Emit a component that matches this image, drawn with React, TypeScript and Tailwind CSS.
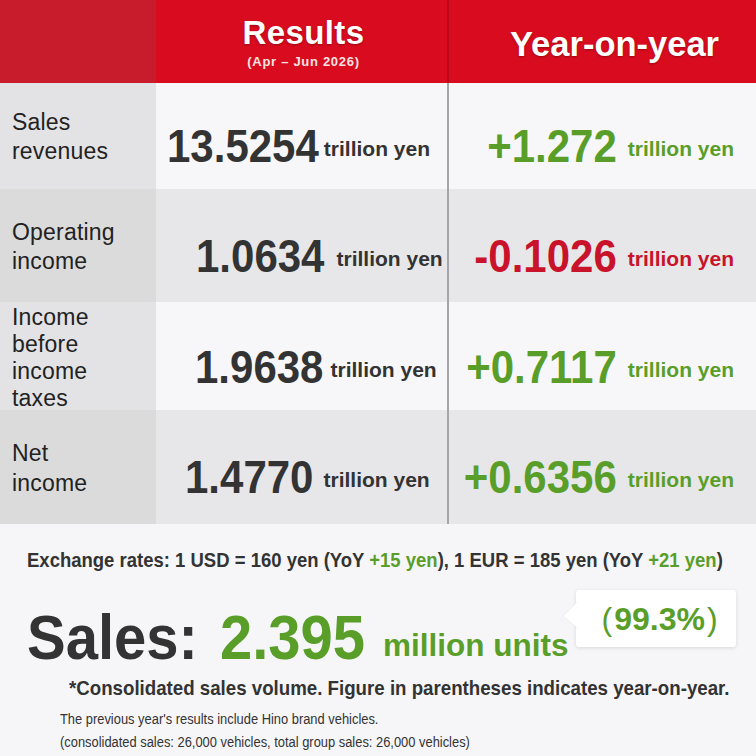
import React from "react";

const GREEN = "text-[#5a9e2a]";

type Row = {
  label: string[];
  leading: string;
  value: string;
  valueGap: string;
  valuePl: string;
  yoy: string;
  yoyColor: string;
  labelBg: string;
  valueBg: string;
  h: string;
};

const rows: Row[] = [
  {
    label: ["Sales", "revenues"],
    leading: "leading-[29px]",
    value: "13.5254",
    valueGap: "ml-[5px]",
    valuePl: "pl-[11px]",
    yoy: "+1.272",
    yoyColor: GREEN,
    labelBg: "bg-[#e3e3e6]",
    valueBg: "bg-[#f7f7f9]",
    h: "h-[106px]",
  },
  {
    label: ["Operating", "income"],
    leading: "leading-[29px]",
    value: "1.0634",
    valueGap: "ml-[12px]",
    valuePl: "pl-[40px]",
    yoy: "-0.1026",
    yoyColor: "text-[#c8132b]",
    labelBg: "bg-[#dbdbdb]",
    valueBg: "bg-[#e7e7ea]",
    h: "h-[113px]",
  },
  {
    label: ["Income", "before", "income", "taxes"],
    leading: "leading-[27px]",
    value: "1.9638",
    valueGap: "ml-[7px]",
    valuePl: "pl-[39px]",
    yoy: "+0.7117",
    yoyColor: GREEN,
    labelBg: "bg-[#e3e3e6]",
    valueBg: "bg-[#f7f7f9]",
    h: "h-[108px]",
  },
  {
    label: ["Net", "income"],
    leading: "leading-[30px]",
    value: "1.4770",
    valueGap: "ml-[10px]",
    valuePl: "pl-[29px]",
    yoy: "+0.6356",
    yoyColor: GREEN,
    labelBg: "bg-[#dbdbdb]",
    valueBg: "bg-[#e7e7ea]",
    h: "h-[114px]",
  },
];

export default function App() {
  return (
    <div className="w-[756px] h-[756px] overflow-hidden bg-[#f6f6f9] font-['Liberation_Sans',Arial,sans-serif] text-[#333]">
      {/* Header */}
      <div className="grid grid-cols-[156px_291px_2px_1fr] h-[83px]">
        <div className="bg-[#c81b2b]" />
        <div className="bg-[#d80b1f] flex flex-col items-center pt-[15px] pl-[4px]">
          <div className="text-white font-bold text-[33px] leading-[36px] tracking-[0.4px] [text-shadow:0_1px_2px_rgba(80,0,0,0.45)]">
            Results
          </div>
          <div className="text-[#fbe3e3] font-bold text-[13px] leading-[14px] mt-[4px] tracking-[0.7px]">
            (Apr – Jun 2026)
          </div>
        </div>
        <div className="bg-[#b70818]" />
        <div className="bg-[#d80b1f] flex items-center justify-center pl-[24px] pt-[4px]">
          <div className="text-white font-bold text-[34.5px] leading-[40px] [text-shadow:0_1px_2px_rgba(80,0,0,0.45)]">
            Year-on-year
          </div>
        </div>
      </div>

      {/* Body rows */}
      {rows.map((r, i) => (
        <div key={i} className={`grid grid-cols-[156px_291px_2px_1fr] ${r.h}`}>
          <div className={`${r.labelBg} flex items-center pl-[12px] pt-[2px]`}>
            <div className={`text-[23px] ${r.leading} text-[#222] tracking-[0.2px]`}>
              {r.label.map((l, j) => (
                <div key={j}>{l}</div>
              ))}
            </div>
          </div>
          <div className={`${r.valueBg} flex items-center ${r.valuePl} pt-[20px]`}>
            <span className="inline-block scale-y-[1.12] font-bold text-[42px] leading-[44px] text-[#333]">
              {r.value}
            </span>
            <span className={`${r.valueGap} font-bold text-[21px] leading-[24px] text-[#333] pt-[6px]`}>
              trillion yen
            </span>
          </div>
          <div className="bg-[#a5a5a8]" />
          <div className={`${r.valueBg} flex items-center justify-end pr-[22px] pt-[20px]`}>
            <span className={`inline-block scale-y-[1.12] font-bold text-[42px] leading-[44px] ${r.yoyColor}`}>
              {r.yoy}
            </span>
            <span className={`ml-[11px] font-bold text-[21px] leading-[24px] pt-[6px] ${r.yoyColor}`}>
              trillion yen
            </span>
          </div>
        </div>
      ))}

      {/* Bottom */}
      <div className="pt-[27px]">
        <div className="pl-[27px] h-[20px] leading-[20px] text-[18.5px] font-bold text-[#333] whitespace-nowrap">
          <span className="inline-block scale-y-[1.08] origin-center">
            Exchange rates: 1 USD = 160 yen (YoY <span className={GREEN}>+15 yen</span>), 1 EUR = 185 yen (YoY{" "}
            <span className={GREEN}>+21 yen</span>)
          </span>
        </div>

        <div className="flex items-end pl-[27px] mt-[37px] h-[58px]">
          <span className="inline-block scale-y-[1.08] font-bold text-[58px] leading-[58px] text-[#333]">
            Sales:
          </span>
          <span className={`inline-block scale-y-[1.08] ml-[22px] font-bold text-[58px] leading-[58px] ${GREEN}`}>
            2.395
          </span>
          <span className={`ml-[18px] font-bold text-[31.5px] leading-[36px] mb-[3px] ${GREEN}`}>
            million units
          </span>
          <div className="relative ml-[7px] mb-[19px] self-end w-[160px] h-[57px] bg-white rounded-[3px] shadow-[0_1px_4px_rgba(0,0,0,0.12)] flex items-center justify-center pl-[8px]">
            <svg
              className="absolute left-[-13px] top-[12px]"
              width="14"
              height="26"
              viewBox="0 0 14 26"
            >
              <polygon points="14,0 0,14 14,26" fill="#ffffff" />
              <polyline points="14,0 0,14 14,26" fill="none" stroke="rgba(0,0,0,0.06)" strokeWidth="1" />
            </svg>
            <span className={`${GREEN} text-[32px] leading-[36px] font-normal`}>(</span>
            <span className={`${GREEN} text-[32px] leading-[36px] font-bold mx-[2px]`}>99.3%</span>
            <span className={`${GREEN} text-[32px] leading-[36px] font-normal`}>)</span>
          </div>
        </div>

        <div className="pl-[69px] mt-[11px] h-[22px] leading-[22px] text-[18.7px] font-bold text-[#333] whitespace-nowrap">
          <span className="inline-block scale-y-[1.1]">
            *Consolidated sales volume. Figure in parentheses indicates year-on-year.
          </span>
        </div>

        <div className="pl-[60px] mt-[8px] text-[12.9px] leading-[23px] text-[#333] whitespace-nowrap">
          <div>
            <span className="inline-block scale-y-[1.12]">The previous year's results include Hino brand vehicles.</span>
          </div>
          <div>
            <span className="inline-block scale-y-[1.12]">
              (consolidated sales: 26,000 vehicles, total group sales: 26,000 vehicles)
            </span>
          </div>
        </div>
      </div>
    </div>
  );
}
